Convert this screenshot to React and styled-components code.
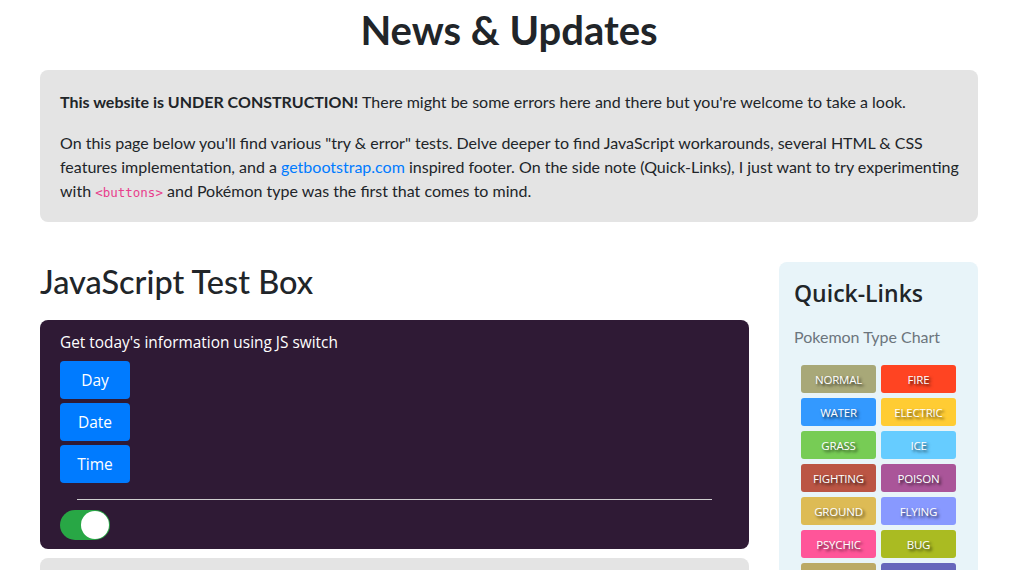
import React, { useState } from 'react';
import styled, { createGlobalStyle } from 'styled-components';

const GlobalStyle = createGlobalStyle`
  body {
    margin: 0;
    background: #fff;
    color: #212529;
    font-family: Lato, "Open Sans", sans-serif;
    font-size: 16px;
    line-height: 1.5;
  }
  * { box-sizing: border-box; }
`;

const types = [
  ['normal', '#a8a878'],
  ['fire', '#ff4422'],
  ['water', '#3399ff'],
  ['electric', '#ffcc33'],
  ['grass', '#77cc55'],
  ['ice', '#66ccff'],
  ['fighting', '#bb5544'],
  ['poison', '#aa5599'],
  ['ground', '#ddbb55'],
  ['flying', '#8899ff'],
  ['psychic', '#ff5599'],
  ['bug', '#aabb22'],
  ['rock', '#bbaa66'],
  ['ghost', '#6666bb'],
];

function App() {
  const [on, setOn] = useState(true);
  return (
    <>
      <GlobalStyle />
      <Page>
        <Title>News &amp; Updates</Title>
        <Notice>
          <p>
            <b>This website is UNDER CONSTRUCTION!</b> There might be some errors here and there but you're welcome to take a look.
          </p>
          <p>
            On this page below you'll find various "try &amp; error" tests. Delve deeper to find JavaScript workarounds, several HTML &amp; CSS
            features implementation, and a <Link href="#">getbootstrap.com</Link> inspired footer. On the side note (Quick-Links), I just want to try experimenting
            with <Code>&lt;buttons&gt;</Code> and Pokémon type was the first that comes to mind.
          </p>
        </Notice>
        <Columns>
          <Main>
            <SectionTitle>JavaScript Test Box</SectionTitle>
            <DarkBox>
              <BoxLabel>Get today's information using JS switch</BoxLabel>
              <ButtonStack>
                <InfoButton>Day</InfoButton>
                <InfoButton>Date</InfoButton>
                <InfoButton>Time</InfoButton>
              </ButtonStack>
              <Rule />
              <Switch $on={on} onClick={() => setOn(!on)}>
                <Knob $on={on} />
              </Switch>
            </DarkBox>
            <GrayBox />
          </Main>
          <Side>
            <SideTitle>Quick-Links</SideTitle>
            <SideSub>Pokemon Type Chart</SideSub>
            <TypeGrid>
              {types.map(([name, color]) => (
                <TypeButton key={name} $color={color}>{name}</TypeButton>
              ))}
            </TypeGrid>
          </Side>
        </Columns>
      </Page>
    </>
  );
}

export default App;

const Page = styled.div`
  width: 938px;
  margin: 0 35px 0 40px;
  height: 570px;
  overflow: hidden;
`;

const Title = styled.h1`
  margin: 0;
  padding-top: 2px;
  text-align: center;
  font-size: 40px;
  font-weight: 700;
  line-height: 56px;
  height: 70px;
`;

const Notice = styled.div`
  background: #e4e4e4;
  border-radius: 8px;
  padding: 20px 14px 17px 20px;
  font-size: 16px;
  line-height: 24px;
  p { margin: 0 0 17px; }
  p:last-child { margin: 0; }
  b { font-weight: 700; }
`;

const Link = styled.a`
  color: #007bff;
  text-decoration: none;
`;

const Code = styled.code`
  font-family: "DejaVu Sans Mono", monospace;
  font-size: 12.5px;
  color: #e83e8c;
`;

const Columns = styled.div`
  display: grid;
  grid-template-columns: 709px 199px;
  column-gap: 30px;
  margin-top: 40px;
`;

const Main = styled.div``;

const SectionTitle = styled.h2`
  margin: 0;
  font-size: 32.5px;
  font-weight: 500;
  line-height: 40px;
  height: 58px;
`;

const DarkBox = styled.div`
  background: #2f1a35;
  border-radius: 8px;
  padding: 11px 20px 9px;
  color: #fff;
`;

const BoxLabel = styled.div`
  font-family: "Open Sans", sans-serif;
  font-size: 15.4px;
  line-height: 24px;
  margin-bottom: 6px;
`;

const ButtonStack = styled.div`
  display: flex;
  flex-direction: column;
  gap: 4px;
  align-items: flex-start;
`;

const InfoButton = styled.button`
  width: 70px;
  height: 38px;
  border: none;
  border-radius: 4px;
  background: #007bff;
  color: #fff;
  font-family: "Open Sans", sans-serif;
  font-size: 15.5px;
  cursor: pointer;
`;

const Rule = styled.hr`
  margin: 16px 17px 10px;
  border: none;
  border-top: 1px solid #cfcfcf;
`;

const Switch = styled.div`
  width: 50px;
  height: 30px;
  border-radius: 15px;
  background: ${p => (p.$on ? '#28a745' : '#777')};
  display: flex;
  align-items: center;
  justify-content: ${p => (p.$on ? 'flex-end' : 'flex-start')};
  padding: 1px;
  cursor: pointer;
`;

const Knob = styled.div`
  width: 28px;
  height: 28px;
  border-radius: 50%;
  background: #fff;
`;

const GrayBox = styled.div`
  margin-top: 9px;
  height: 40px;
  background: #e4e4e4;
  border-radius: 8px;
`;

const Side = styled.div`
  background: #e8f4f9;
  border-radius: 8px;
  padding: 15px 15px 0;
  height: 400px;
`;

const SideTitle = styled.h3`
  margin: 0;
  font-family: "Open Sans", sans-serif;
  font-size: 23px;
  font-weight: 600;
  line-height: 32px;
`;

const SideSub = styled.div`
  margin-top: 16px;
  color: #6c757d;
  font-size: 16px;
  line-height: 24px;
`;

const TypeGrid = styled.div`
  display: grid;
  grid-template-columns: 75px 75px;
  gap: 5px;
  padding: 16px 0 0 7px;
`;

const TypeButton = styled.button`
  height: 28px;
  border: none;
  border-radius: 3px;
  background: ${p => p.$color};
  color: #fff;
  font-family: "Open Sans", sans-serif;
  font-size: 11.5px;
  letter-spacing: -0.2px;
  text-transform: uppercase;
  text-shadow: 2px 2px 3px rgba(0, 0, 0, 0.75);
  padding: 0;
  cursor: pointer;
`;
